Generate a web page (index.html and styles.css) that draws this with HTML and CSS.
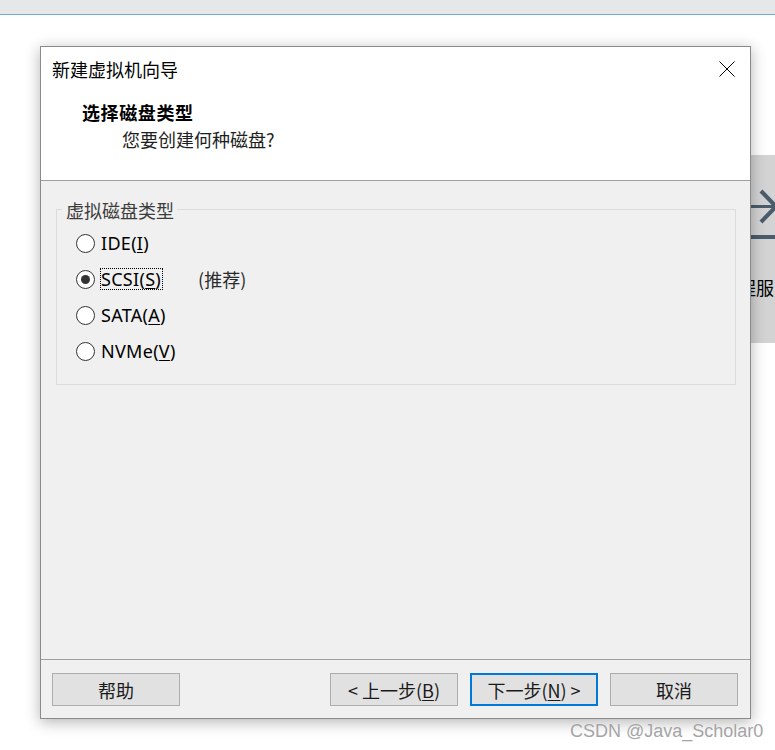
FILE: index.html
```html
<!DOCTYPE html>
<html lang="zh-CN">
<head>
<meta charset="utf-8">
<title>新建虚拟机向导</title>
<link rel="stylesheet" href="styles.css">
</head>
<body>
<div class="desktop">
  <div class="topbar"></div>

  <div class="bgwin">
    <svg class="bgwin-icon" width="100" height="90" viewBox="0 0 100 90">
      <line x1="0" y1="51.5" x2="100" y2="51.5" stroke="#4a5d6c" stroke-width="3"/>
      <polyline points="61,36 76,51.5 61,67" fill="none" stroke="#4a5d6c" stroke-width="4"/>
      <rect x="0" y="80" width="100" height="4" fill="#4a5d6c"/>
    </svg>
    <div class="bgwin-text">程服</div>
  </div>

  <div class="dialog">
    <div class="dlg-header">
      <div class="dlg-titlebar">
        <span class="dlg-title">新建虚拟机向导</span>
        <svg class="dlg-close" width="16" height="16" viewBox="0 0 16 16">
          <line x1="0.5" y1="0.5" x2="15.5" y2="15.5" stroke="#000" stroke-width="1"/>
          <line x1="15.5" y1="0.5" x2="0.5" y2="15.5" stroke="#000" stroke-width="1"/>
        </svg>
      </div>
      <div class="dlg-heading">选择磁盘类型</div>
      <div class="dlg-sub">您要创建何种磁盘?</div>
    </div>

    <div class="dlg-body">
      <div class="groupbox">
        <div class="legend">虚拟磁盘类型</div>
        <div class="radio-list">
          <div class="radio-row">
            <span class="radio"></span>
            <span class="radio-label">IDE(<u>I</u>)</span>
          </div>
          <div class="radio-row">
            <span class="radio checked"></span>
            <span class="radio-label focus">SCSI(<u>S</u>)</span>
            <span class="recommend">(推荐)</span>
          </div>
          <div class="radio-row">
            <span class="radio"></span>
            <span class="radio-label">SATA(<u>A</u>)</span>
          </div>
          <div class="radio-row">
            <span class="radio"></span>
            <span class="radio-label">NVMe(<u>V</u>)</span>
          </div>
        </div>
      </div>
    </div>

    <div class="dlg-footer">
      <button class="btn">帮助</button>
      <div class="spacer"></div>
      <button class="btn">&lt;&nbsp;上一步(<u>B</u>)</button>
      <button class="btn primary">下一步(<u>N</u>)&nbsp;&gt;</button>
      <button class="btn">取消</button>
    </div>
  </div>

  <div class="watermark">CSDN @Java_Scholar0</div>
</div>
</body>
</html>
```

FILE: styles.css
```css
* {
  box-sizing: border-box;
}

html, body {
  margin: 0;
  padding: 0;
  background: #ffffff;
}

body {
  font-family: "Noto Sans CJK SC", "Noto Sans", sans-serif;
  color: #000;
}

.desktop {
  position: relative;
  width: 775px;
  height: 750px;
  overflow: hidden;
  background: #ffffff;
}

.topbar {
  height: 15px;
  background: #e6e7e9;
  border-bottom: 1px solid #74a9d8;
}

/* background window peeking out on the right */
.bgwin {
  position: absolute;
  left: 700px;
  top: 155px;
  width: 100px;
  height: 188px;
  background: #d3d3d3;
}

.bgwin-icon {
  display: block;
}

.bgwin-text {
  margin-top: 30px;
  padding-left: 38px;
  font-size: 18px;
  line-height: 24px;
  white-space: nowrap;
  color: #000;
}

/* wizard dialog */
.dialog {
  position: absolute;
  left: 40px;
  top: 46px;
  width: 711px;
  height: 673px;
  border: 1px solid #8a8a8a;
  background: #f0f0f0;
  display: flex;
  flex-direction: column;
  box-shadow: 0 3px 14px rgba(0, 0, 0, 0.3);
}

.dlg-header {
  height: 134px;
  flex: none;
  background: #ffffff;
  border-bottom: 1px solid #a0a0a0;
}

.dlg-titlebar {
  height: 43px;
  display: flex;
  align-items: center;
  padding-left: 11px;
  padding-right: 15px;
}

.dlg-title {
  flex: 1;
  font-size: 18px;
  line-height: 24px;
  color: #000;
}

.dlg-close {
  display: block;
  margin-top: 1px;
}

.dlg-heading {
  margin-top: 10px;
  padding-left: 41px;
  font-size: 18px;
  line-height: 24px;
  font-weight: 700;
  letter-spacing: 0.6px;
  color: #000;
}

.dlg-sub {
  margin-top: 3px;
  padding-left: 81px;
  font-size: 18px;
  line-height: 24px;
  color: #1e1e1e;
}

.dlg-body {
  flex: 1;
  padding: 28px 14px 0 15px;
}

.groupbox {
  height: 176px;
  border: 1px solid #dcdcdc;
}

.legend {
  display: table;
  margin: -10px 0 0 5px;
  padding: 0 3px 0 4px;
  background: #f0f0f0;
  font-size: 18px;
  line-height: 20px;
  color: #3c3c3c;
}

.radio-list {
  display: flex;
  flex-direction: column;
  padding: 5px 0 0 19px;
}

.radio-row {
  height: 36px;
  display: flex;
  align-items: center;
}

.radio {
  width: 19px;
  height: 19px;
  flex: none;
  border: 1px solid #333333;
  border-radius: 50%;
  background: #ffffff;
  display: flex;
  align-items: center;
  justify-content: center;
  margin-right: 5px;
}

.radio.checked::after {
  content: "";
  width: 9px;
  height: 9px;
  border-radius: 50%;
  background: #333333;
}

.radio-label {
  font-family: "Noto Sans", sans-serif;
  font-size: 18px;
  letter-spacing: 0.3px;
  line-height: 20px;
  border: 1px dotted transparent;
  padding: 0 1px 0 0;
  color: #000;
}

.radio-label.focus {
  border-color: #000;
}

.radio-label u,
.btn u {
  text-decoration-thickness: 1px;
  text-underline-offset: 2px;
}

.recommend {
  margin-left: 35px;
  font-size: 18px;
  line-height: 20px;
  color: #2a2a2a;
}

.dlg-footer {
  height: 59px;
  flex: none;
  border-top: 1px solid #a0a0a0;
  display: flex;
  align-items: flex-start;
  padding: 13px 12px 0 11px;
  gap: 12px;
}

.spacer {
  flex: 1;
}

.btn {
  width: 128px;
  height: 33px;
  flex: none;
  border: 1px solid #adadad;
  background: #e1e1e1;
  font-family: "Noto Sans CJK SC", "Noto Sans", sans-serif;
  font-size: 18px;
  line-height: 24px;
  color: #1a1a1a;
  padding: 0;
  display: flex;
  align-items: center;
  justify-content: center;
}

.btn.primary {
  border: 2px solid #0078d7;
}

.watermark {
  position: absolute;
  left: 570px;
  top: 720px;
  font-family: "Liberation Sans", Arial, sans-serif;
  font-size: 18px;
  line-height: 22px;
  color: #a4a4a4;
  text-shadow: 0 0 1px #ffffff;
  white-space: nowrap;
}
```
